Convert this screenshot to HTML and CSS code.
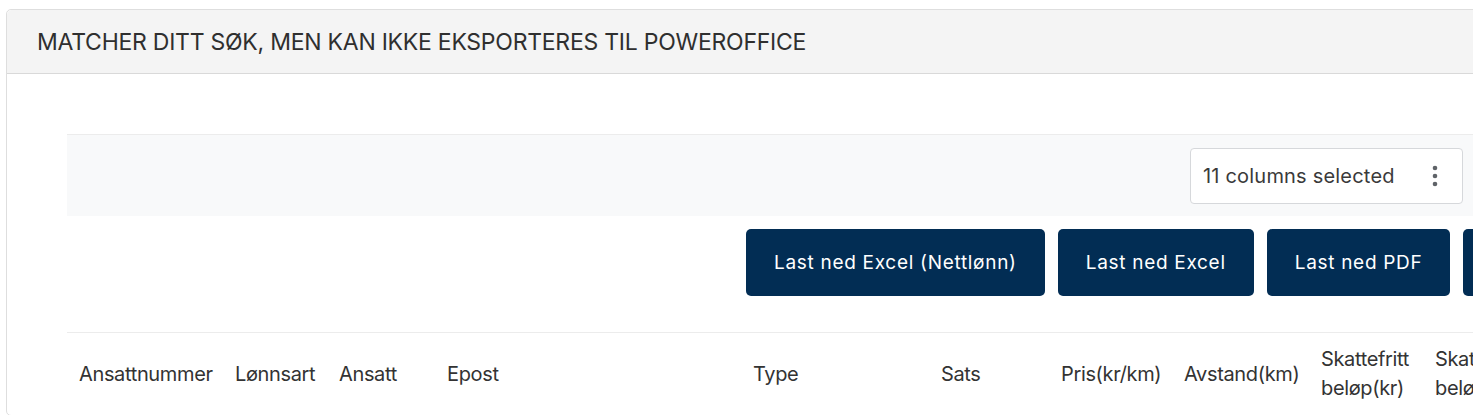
FILE: index.html
```html
<!DOCTYPE html>
<html lang="no">
<head>
  <meta charset="UTF-8">
  <meta name="viewport" content="width=device-width, initial-scale=1.0">
  <title>Eksport</title>
  <link rel="stylesheet" href="styles.css">
</head>
<body>

  <div class="card">
    <div class="card-header">
      <h3>MATCHER DITT SØK, MEN KAN IKKE EKSPORTERES TIL POWEROFFICE</h3>
    </div>

    <div class="card-body">
      <div class="toolbar">
        <div class="column-picker">
          <span>11 columns selected</span>
          <svg class="kebab" width="6" height="24" viewBox="0 0 6 24">
            <circle cx="3" cy="4" r="2.3"/>
            <circle cx="3" cy="12" r="2.3"/>
            <circle cx="3" cy="20" r="2.3"/>
          </svg>
        </div>
      </div>

      <div class="actions">
        <button type="button" class="btn">Last ned Excel (Nettlønn)</button>
        <button type="button" class="btn">Last ned Excel</button>
        <button type="button" class="btn">Last ned PDF</button>
        <button type="button" class="btn">Last ned CSV</button>
      </div>

      <table class="report">
        <colgroup>
          <col style="width:156px">
          <col style="width:104px">
          <col style="width:108px">
          <col style="width:306px">
          <col style="width:188px">
          <col style="width:120px">
          <col style="width:123px">
          <col style="width:137px">
          <col style="width:114px">
          <col style="width:114px">
          <col style="width:114px">
        </colgroup>
        <thead>
          <tr>
            <th>Ansattnummer</th>
            <th>Lønnsart</th>
            <th>Ansatt</th>
            <th>Epost</th>
            <th>Type</th>
            <th>Sats</th>
            <th>Pris(kr/km)</th>
            <th>Avstand(km)</th>
            <th class="wrap">Skattefritt beløp(kr)</th>
            <th class="wrap">Skattepliktig beløp(kr)</th>
            <th>Dato</th>
          </tr>
        </thead>
      </table>
    </div>
  </div>

</body>
</html>
```

FILE: styles.css
```css
html, body {
  overflow: hidden;
}
body {
  font-family: Inter, "Noto Sans", sans-serif;
  background-color: #ffffff;
  margin: 0;
  padding: 9px 0 0 6px;
  color: #333;
}
.card {
  width: 1700px;
  border: 1px solid #dedede;
  border-radius: 5px;
  background-color: white;
}
.card-header {
  background-color: #f4f4f4;
  border-bottom: 1px solid #d9d9d9;
  border-radius: 5px 5px 0 0;
  height: 63px;
  display: flex;
  align-items: center;
  padding-left: 30px;
}
.card-header h3 {
  margin: 0;
  font-size: 23px;
  font-weight: 400;
  letter-spacing: -0.25px;
  color: #2f2f2f;
}
.card-body {
  padding: 60px 0 0 60px;
}
.toolbar {
  width: 1408px;
  box-sizing: border-box;
  background-color: #f8f9fa;
  border-top: 1px solid #ececec;
  height: 82px;
  display: flex;
  justify-content: flex-end;
  align-items: center;
  padding-right: 12px;
}
.column-picker {
  width: 273px;
  height: 56px;
  box-sizing: border-box;
  background-color: white;
  border: 1px solid #d6d8db;
  border-radius: 4px;
  display: flex;
  align-items: center;
  justify-content: space-between;
  padding: 0 24px 0 12px;
  font-size: 20px;
  letter-spacing: 0.2px;
  color: #3a3a3a;
}
.kebab {
  fill: #5f6368;
}
.actions {
  display: flex;
  gap: 13px;
  margin: 13px 0 0 679px;
  height: 67px;
}
.btn {
  flex: none;
  height: 67px;
  padding: 0 28px;
  background-color: #022d54;
  color: white;
  border: none;
  border-radius: 5px;
  font-family: Inter, "Noto Sans", sans-serif;
  font-size: 19px;
  letter-spacing: 0.7px;
  cursor: pointer;
}
.btn:hover {
  background-color: #0a3a66;
}
.report {
  margin-top: 36px;
  border-collapse: collapse;
  table-layout: fixed;
  width: 1584px;
  border-top: 1px solid #ececec;
}
.report th {
  text-align: left;
  vertical-align: middle;
  white-space: nowrap;
  font-weight: 400;
  font-size: 20px;
  letter-spacing: -0.35px;
  line-height: 29px;
  padding: 12px;
  color: #333;
}
.report th.wrap {
  white-space: normal;
}
```
